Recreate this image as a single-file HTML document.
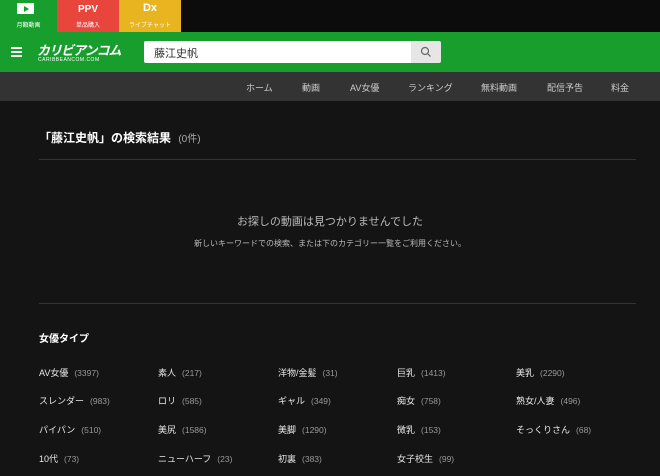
<!DOCTYPE html>
<html><head><meta charset="utf-8"><style>
*{margin:0;padding:0;box-sizing:border-box}
body{width:660px;height:476px;overflow:hidden;background:#141414;font-family:"Liberation Sans","Noto Sans CJK JP",sans-serif;color:#ddd;position:relative}
.a{position:absolute}
.top{left:0;top:0;width:660px;height:32px;background:#0c0c0c}
.tab{top:0;height:32px;text-align:center;color:#fff}
.tab small{position:absolute;left:0;right:0;top:20px;font-size:6px}
.hdr{left:0;top:32px;width:660px;height:40px;background:#179e2c}
.nav{left:0;top:72px;width:660px;height:29px;background:#333}
.nav span{position:absolute;top:9px;font-size:9px;color:#ccc}
.ln{height:1px;background:#333;left:39px;width:597px}
.cat{font-size:9px;color:#e8e8e8}
.cat i{font-style:normal;color:#999;margin-left:6px;font-size:8.5px}
</style></head><body>
<div class="a top"></div>
<div class="a tab" style="left:0;width:57px;background:#179e2c">
<div class="a" style="left:17px;top:3px;width:17px;height:11px;background:#fff;border-radius:1px"></div>
<div class="a" style="left:24px;top:6px;width:0;height:0;border-left:5px solid #179e2c;border-top:3px solid transparent;border-bottom:3px solid transparent"></div>
<small>月額動画</small></div>
<div class="a tab" style="left:57px;width:62px;background:#e8453c"><div class="a" style="left:0;right:0;top:4px;font-size:10px;font-weight:bold">PPV</div><small>単品購入</small></div>
<div class="a tab" style="left:119px;width:62px;background:#e8b520"><div class="a" style="left:0;right:0;top:2px;font-size:11px;font-weight:bold">Dx</div><small>ライブチャット</small></div>
<div class="a hdr"></div>
<div class="a" style="left:11px;top:47px;width:11px;height:2px;background:#fff;box-shadow:0 4px 0 #fff,0 8px 0 #fff"></div>
<div class="a" style="left:37px;top:40px;font-size:13px;font-style:italic;font-weight:bold;color:#fff;letter-spacing:-1px">カリビアンコム</div>
<div class="a" style="left:38px;top:57px;font-size:5px;color:#fff;letter-spacing:.5px">CARIBBEANCOM.COM</div>
<div class="a" style="left:144px;top:41px;width:267px;height:22px;background:#fff;border-radius:2px 0 0 2px;font-size:11px;color:#333;padding:4px 10px">藤江史帆</div>
<div class="a" style="left:411px;top:41px;width:30px;height:22px;background:#e6e6e6;border-radius:0 2px 2px 0"></div>
<svg class="a" style="left:420px;top:46px" width="12" height="12"><circle cx="5" cy="5" r="3.5" stroke="#666" fill="none" stroke-width="1.2"/><line x1="7.5" y1="7.5" x2="10.5" y2="10.5" stroke="#666" stroke-width="1.2"/></svg>
<div class="a nav"><span style="left:246px">ホーム</span><span style="left:302px">動画</span><span style="left:350px">AV女優</span><span style="left:408px">ランキング</span><span style="left:481px">無料動画</span><span style="left:547px">配信予告</span><span style="left:611px">料金</span></div>
<div class="a" style="left:39px;top:129px;font-size:12px;font-weight:bold;color:#fff">「藤江史帆」の検索結果 <span style="font-weight:normal;color:#aaa;font-size:10px;margin-left:4px">(0件)</span></div>
<div class="a ln" style="top:159px"></div>
<div class="a" style="left:0;width:660px;top:213px;text-align:center;font-size:11px;color:#bbb">お探しの動画は見つかりませんでした</div>
<div class="a" style="left:0;width:660px;top:238px;text-align:center;font-size:8px;color:#bbb">新しいキーワードでの検索、または下のカテゴリー一覧をご利用ください。</div>
<div class="a ln" style="top:303px"></div>
<div class="a" style="left:39px;top:330px;font-size:10px;font-weight:bold;color:#fff">女優タイプ</div>
<div class="a cat" style="left:39px;top:366px">AV女優<i>(3397)</i></div>
<div class="a cat" style="left:158px;top:366px">素人<i>(217)</i></div>
<div class="a cat" style="left:278px;top:366px">洋物/金髪<i>(31)</i></div>
<div class="a cat" style="left:397px;top:366px">巨乳<i>(1413)</i></div>
<div class="a cat" style="left:516px;top:366px">美乳<i>(2290)</i></div>
<div class="a cat" style="left:39px;top:394px">スレンダー<i>(983)</i></div>
<div class="a cat" style="left:158px;top:394px">ロリ<i>(585)</i></div>
<div class="a cat" style="left:278px;top:394px">ギャル<i>(349)</i></div>
<div class="a cat" style="left:397px;top:394px">痴女<i>(758)</i></div>
<div class="a cat" style="left:516px;top:394px">熟女/人妻<i>(496)</i></div>
<div class="a cat" style="left:39px;top:423px">パイパン<i>(510)</i></div>
<div class="a cat" style="left:158px;top:423px">美尻<i>(1586)</i></div>
<div class="a cat" style="left:278px;top:423px">美脚<i>(1290)</i></div>
<div class="a cat" style="left:397px;top:423px">微乳<i>(153)</i></div>
<div class="a cat" style="left:516px;top:423px">そっくりさん<i>(68)</i></div>
<div class="a cat" style="left:39px;top:452px">10代<i>(73)</i></div>
<div class="a cat" style="left:158px;top:452px">ニューハーフ<i>(23)</i></div>
<div class="a cat" style="left:278px;top:452px">初裏<i>(383)</i></div>
<div class="a cat" style="left:397px;top:452px">女子校生<i>(99)</i></div>
</body></html>
